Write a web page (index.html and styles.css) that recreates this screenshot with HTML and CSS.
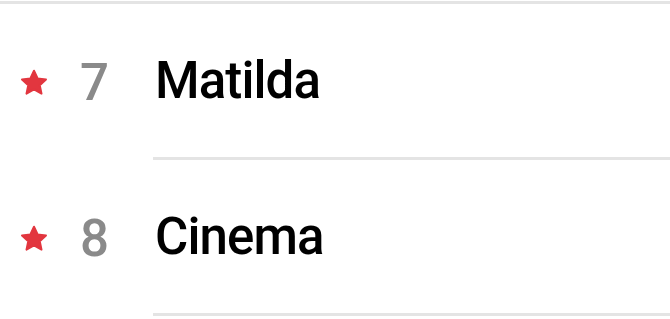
FILE: index.html
```html
<!DOCTYPE html>
<html lang="en">
<head>
  <meta charset="UTF-8">
  <meta name="viewport" content="width=device-width, initial-scale=1.0">
  <title>Rankings</title>
  <link rel="stylesheet" href="styles.css">
</head>
<body>
  <div class="rank-list">
    <div class="rank-row top-edge">
      <div class="rank-title"></div>
    </div>

    <div class="rank-row">
      <span class="star">
        <svg viewBox="0 0 24 24" width="30" height="30"><path d="M12 2.2l2.9 6.2 6.7.8-5 4.6 1.4 6.7L12 17.1l-6 3.4 1.4-6.7-5-4.6 6.7-.8z"/></svg>
      </span>
      <span class="rank-num">7</span>
      <div class="rank-title">Matilda</div>
    </div>

    <div class="rank-row">
      <span class="star">
        <svg viewBox="0 0 24 24" width="30" height="30"><path d="M12 2.2l2.9 6.2 6.7.8-5 4.6 1.4 6.7L12 17.1l-6 3.4 1.4-6.7-5-4.6 6.7-.8z"/></svg>
      </span>
      <span class="rank-num">8</span>
      <div class="rank-title">Cinema</div>
    </div>
  </div>
</body>
</html>
```

FILE: styles.css
```css
* {
  margin: 0;
  padding: 0;
  box-sizing: border-box;
}

body {
  background: #fff;
  color: #000;
  font-family: 'Roboto', 'Liberation Sans', sans-serif;
  overflow: hidden;
}

.rank-list {
  padding-top: 1px;
}

.rank-row {
  display: flex;
  align-items: stretch;
  height: 156px;
}

.rank-row.top-edge {
  height: 3px;
}

.star {
  width: 80px;
  display: flex;
  align-items: center;
  padding-left: 19px;
  padding-top: 2px;
}

.star svg {
  display: block;
  fill: #e2363f;
  stroke: #e2363f;
  stroke-width: 1.6;
  stroke-linejoin: round;
}

.rank-num {
  width: 73px;
  display: flex;
  align-items: center;
  font-size: 51px;
  font-weight: 500;
  color: #8a8a8a;
}

.rank-title {
  flex: 1;
  display: flex;
  align-items: center;
  padding-left: 2px;
  font-size: 51px;
  font-weight: 500;
  letter-spacing: -0.9px;
  border-bottom: 3px solid #e4e4e4;
}
```
